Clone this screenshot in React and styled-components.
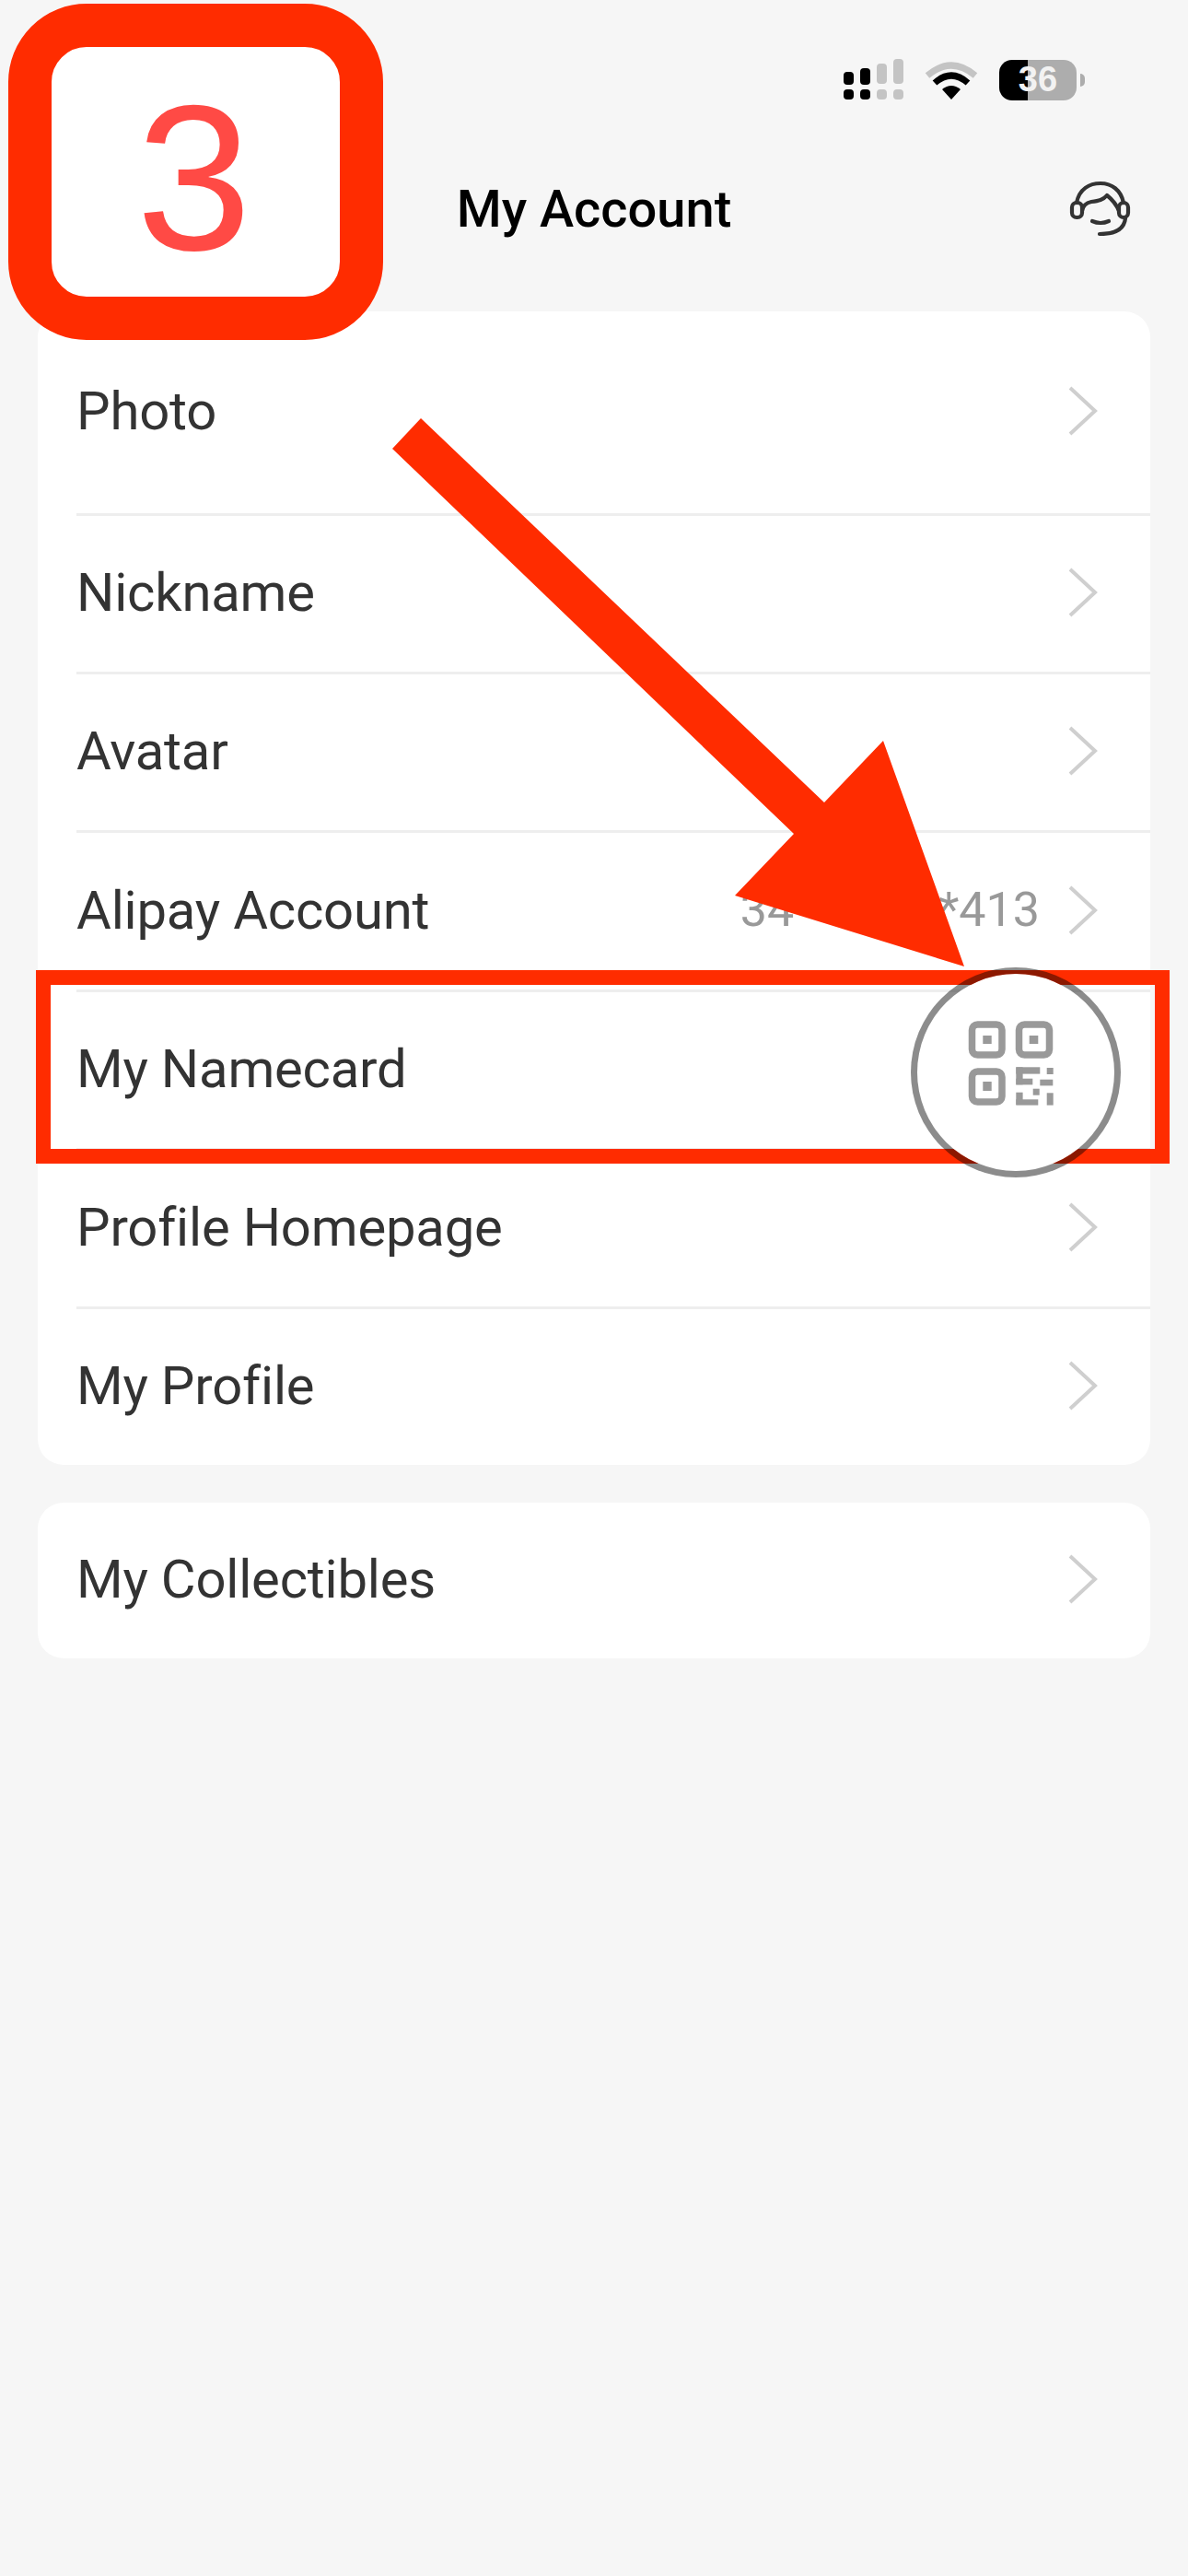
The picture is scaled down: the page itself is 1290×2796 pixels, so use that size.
import React from "react"
import styled, { createGlobalStyle } from "styled-components"

const Global = createGlobalStyle`
  html, body {
    margin: 0;
    padding: 0;
    background: #f6f6f6;
  }
`

const Page = styled.div`
  position: relative;
  width: 1290px;
  height: 2796px;
  overflow: hidden;
  background: #f6f6f6;
  font-family: Roboto, "Liberation Sans", sans-serif;
`

const StatusBar = styled.div`
  display: flex;
  justify-content: flex-end;
  align-items: center;
  gap: 22px;
  height: 45px;
  padding: 64px 120px 0 0;
`

const Battery = styled.div`
  position: relative;
  display: flex;
  align-items: center;
  justify-content: center;
  width: 84px;
  height: 44px;
  border-radius: 14px;
  background: linear-gradient(to right, #000 31px, #adadad 31px);
  color: #f2f2f2;
  font-family: "Liberation Sans", sans-serif;
  font-size: 38px;
  font-weight: 700;

  &::after {
    content: "";
    position: absolute;
    left: 88px;
    top: 15px;
    width: 5px;
    height: 14px;
    border-radius: 0 7px 7px 0;
    background: #adadad;
  }
`

const BatteryWrap = styled.div`
  margin-left: 1px;
  margin-right: -8px;
  width: 93px;
`

const NavBar = styled.div`
  display: grid;
  grid-template-columns: 1fr auto 1fr;
  align-items: center;
  height: 85px;
  margin-top: 76px;
  padding: 0 50px;
`

const Title = styled.h1`
  margin: 0;
  grid-column: 2;
  color: #000;
  font-size: 56px;
  font-weight: 500;
  line-height: 85px;
`

const NavAction = styled.div`
  grid-column: 3;
  display: flex;
  justify-content: flex-end;
`

const Card = styled.section`
  margin: ${p => p.$gap}px 41px 0;
  border-radius: 28px;
  background: #fff;
  overflow: hidden;
`

const Row = styled.div`
  display: flex;
  align-items: center;
  height: ${p => p.$height}px;
  margin-left: 42px;
  padding: 0 57px 3px 0;
  box-sizing: border-box;
  border-bottom: ${p => (p.$last ? "none" : "3px solid #eeeeee")};
`

const Label = styled.span`
  flex: 1;
  color: #333;
  font-size: 58px;
  font-weight: 400;
  letter-spacing: -0.2px;
`

const Value = styled.span`
  margin-right: 31px;
  color: #999;
  font-size: 52px;
  font-weight: 400;
`

const RedFrame = styled.div`
  position: absolute;
  left: 39px;
  top: 1053px;
  width: 1231px;
  height: 210px;
  box-sizing: border-box;
  border: 16px solid #ff2c00;
`

const ArrowLayer = styled.svg`
  position: absolute;
  left: 0;
  top: 0;
`

const Loupe = styled.div`
  position: absolute;
  left: 989px;
  top: 1050px;
  display: flex;
  align-items: center;
  justify-content: center;
  width: 228px;
  height: 228px;
  box-sizing: border-box;
  padding: 0 11px 19px 0;
  border: 7px solid rgba(0, 0, 0, 0.45);
  border-radius: 50%;
  background: #fff;
  background-clip: padding-box;
`

const StepBadge = styled.div`
  position: absolute;
  left: 9px;
  top: 4px;
  display: flex;
  align-items: center;
  justify-content: center;
  width: 407px;
  height: 365px;
  box-sizing: border-box;
  padding: 14px 4px 0 0;
  border: 47px solid #ff2c00;
  border-radius: 85px;
  background: #fff;
  color: #ff4a45;
  font-family: "Liberation Sans", sans-serif;
  font-size: 225px;
  line-height: 1;
`

const Chevron = () => (
  <svg width="32" height="54" viewBox="0 0 32 54" fill="none">
    <path d="M2 2 L29 27 L2 52" stroke="#cfcfcf" strokeWidth="4" />
  </svg>
)

const SignalIcon = () => (
  <svg width="66" height="45" viewBox="0 0 66 45">
    <g fill="#000">
      <rect x="0" y="14" width="11" height="14" rx="4" />
      <rect x="18" y="10" width="11" height="18" rx="4" />
      <rect x="0" y="33" width="11" height="11" rx="4" />
      <rect x="18" y="33" width="11" height="11" rx="4" />
    </g>
    <g fill="#c4c4c4">
      <rect x="36" y="5" width="11" height="22" rx="4" />
      <rect x="54" y="0" width="11" height="27" rx="4" />
      <rect x="36" y="33" width="11" height="11" rx="4" />
      <rect x="54" y="33" width="11" height="11" rx="4" />
    </g>
  </svg>
)

const WifiIcon = () => (
  <svg width="58" height="42" viewBox="0 0 58 42">
    <path d="M3 16 Q29 -6 55 16" fill="none" stroke="#c4c4c4" strokeWidth="7" />
    <path d="M11 24 Q29 8 47 24" fill="none" stroke="#000" strokeWidth="7" />
    <path d="M19 31 Q29 23 39 31 L29 42 Z" fill="#000" />
  </svg>
)

const HeadsetIcon = () => (
  <svg width="90" height="85" viewBox="0 0 90 85" fill="none" stroke="#333" strokeWidth="4.2" strokeLinecap="round" strokeLinejoin="round">
    <path d="M19 35 C22 20 33 14 45 14 C57 14 67 21 70 35" />
    <rect x="14" y="35" width="11" height="16" rx="5" />
    <rect x="65" y="35" width="10" height="16" rx="5" />
    <path d="M25 44 C26 38 30 35 35 34 C43 33 48 32 52 27 C57 31 62 36 65 44" />
    <path d="M36 55 Q45 59 54 55" />
    <path d="M72 52 C71 62 64 69 44 69" />
  </svg>
)

const QrIcon = () => (
  <svg width="93" height="93" viewBox="11 9 93 93" fill="none">
    <g stroke="#999" strokeWidth="7.5">
      <rect x="15.5" y="13" width="32.5" height="33" rx="6" />
      <rect x="66.5" y="13" width="33" height="33" rx="6" />
      <rect x="15.5" y="64" width="32.5" height="33" rx="6" />
    </g>
    <g fill="#999">
      <rect x="27.3" y="25" width="9.4" height="9" />
      <rect x="77.7" y="25" width="9.6" height="9" />
      <rect x="27.3" y="75" width="9.4" height="10" />
      <rect x="63.3" y="59.3" width="26" height="7.3" />
      <rect x="63.3" y="59.3" width="7.3" height="19" />
      <rect x="63.3" y="71.7" width="18" height="6.7" />
      <rect x="96.7" y="60" width="7" height="7" />
      <rect x="89.3" y="72.7" width="14" height="6.7" />
      <rect x="81.7" y="82.7" width="7" height="7" />
      <rect x="63.3" y="86.7" width="7.3" height="13.3" />
      <rect x="63.3" y="94.3" width="24" height="6.3" />
      <rect x="96.7" y="87.3" width="7" height="13.3" />
    </g>
  </svg>
)

const accountRows = [
  { label: "Photo", height: 222 },
  { label: "Nickname", height: 172 },
  { label: "Avatar", height: 172 },
  { label: "Alipay Account", height: 173, value: "34********413" },
  { label: "My Namecard", height: 172, noChevron: true },
  { label: "Profile Homepage", height: 172 },
  { label: "My Profile", height: 169, last: true },
]

const App = () => (
  <Page>
    <Global />
    <StatusBar>
      <SignalIcon />
      <WifiIcon />
      <BatteryWrap>
        <Battery>36</Battery>
      </BatteryWrap>
    </StatusBar>
    <NavBar>
      <Title>My Account</Title>
      <NavAction>
        <HeadsetIcon />
      </NavAction>
    </NavBar>

    <Card $gap={68}>
      {accountRows.map(row => (
        <Row key={row.label} $height={row.height} $last={row.last}>
          <Label>{row.label}</Label>
          {row.value && <Value>{row.value}</Value>}
          {!row.noChevron && <Chevron />}
        </Row>
      ))}
    </Card>
    <Card $gap={41}>
      <Row $height={169} $last>
        <Label>My Collectibles</Label>
        <Chevron />
      </Row>
    </Card>

    <RedFrame />
    <ArrowLayer width="1290" height="1100" viewBox="0 0 1290 1100">
      <polygon
        points="457,454 895,871 959,804 1047,1049 798,972 862,905 426,487"
        fill="#ff2c00"
      />
    </ArrowLayer>
    <Loupe>
      <QrIcon />
    </Loupe>
    <StepBadge>3</StepBadge>
  </Page>
)

export default App
